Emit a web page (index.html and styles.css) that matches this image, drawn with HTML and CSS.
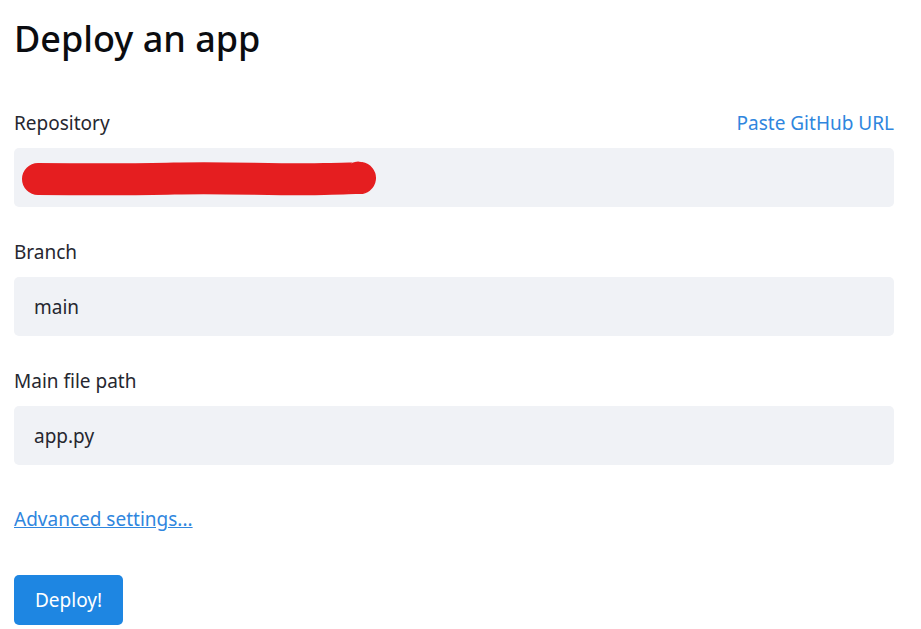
FILE: index.html
```html
<!DOCTYPE html>
<html lang="en">
<head>
<meta charset="utf-8">
<title>Deploy an app</title>
<link rel="stylesheet" href="styles.css">
</head>
<body>
<main class="page">
  <h1 class="title">Deploy an app</h1>

  <div class="field">
    <div class="label-row">
      <span class="label">Repository</span>
      <a class="link" href="#">Paste GitHub URL</a>
    </div>
    <div class="input">
      <svg class="redact" width="380" height="42" viewBox="0 0 380 42" aria-hidden="true">
        <path d="M24 21 C 60 21, 110 22, 160 20.5 S 260 22, 310 21 S 338 19, 346 20" fill="none" stroke="#e51e20" stroke-width="32" stroke-linecap="round"/>
      </svg>
    </div>
  </div>

  <div class="field">
    <div class="label-row"><span class="label">Branch</span></div>
    <div class="input">main</div>
  </div>

  <div class="field">
    <div class="label-row"><span class="label">Main file path</span></div>
    <div class="input">app.py</div>
  </div>

  <a class="advanced" href="#">Advanced settings...</a>

  <div class="actions">
    <button class="deploy" type="button">Deploy!</button>
  </div>
</main>
</body>
</html>
```

FILE: styles.css
```css
* { box-sizing: border-box; }
html, body { margin: 0; padding: 0; background: #ffffff; }
body {
  font-family: "Noto Sans", "Open Sans", sans-serif;
  color: #262730;
  font-size: 19px;
}
.page {
  width: 880px;
  margin-left: 14px;
  padding-top: 15px;
  display: flex;
  flex-direction: column;
}
.title {
  margin: 0;
  font-size: 36px;
  font-weight: 500;
  line-height: 48px;
  color: #0b0c10;
}
.field {
  display: flex;
  flex-direction: column;
  margin-top: 48px;
}
.field + .field { margin-top: 33px; }
.label-row {
  display: flex;
  justify-content: space-between;
  align-items: baseline;
  line-height: 24px;
  margin-bottom: 13px;
}
.label { color: #262730; }
.link { color: #2f86de; text-decoration: none; }
.input {
  height: 59px;
  background: #f0f2f6;
  border-radius: 5px;
  display: flex;
  align-items: center;
  padding-left: 20px;
  color: #262730;
  position: relative;
}
.redact {
  position: absolute;
  left: 0;
  top: 10px;
}
.advanced {
  margin-top: 42px;
  align-self: flex-start;
  color: #2f86de;
  line-height: 24px;
  text-decoration: underline;
}
.actions { margin-top: 44px; }
.deploy {
  font-family: inherit;
  font-size: 19px;
  color: #ffffff;
  background: #1e86e2;
  border: none;
  border-radius: 5px;
  height: 50px;
  width: 109px;
  padding: 0;
}
```
